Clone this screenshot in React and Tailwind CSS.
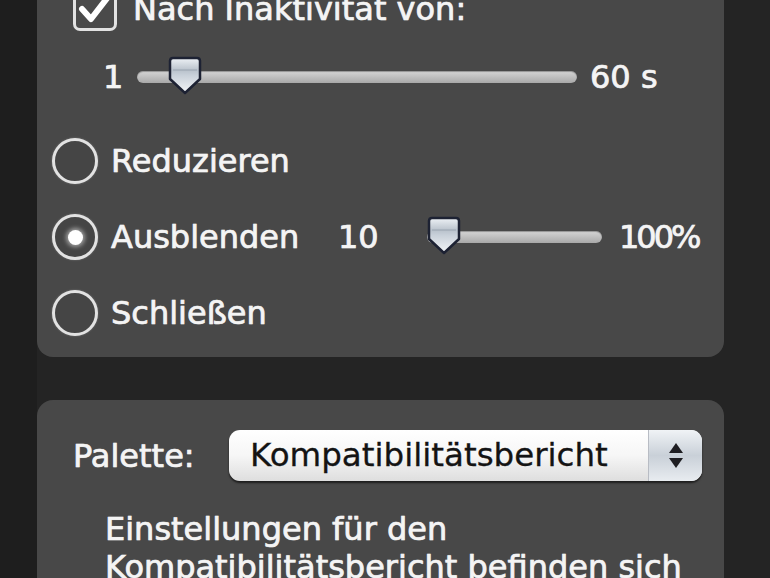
const FONT = { fontFamily: '"DejaVu Sans", Verdana, sans-serif' }

function Knob() {
  return (
    <svg width="34" height="39" viewBox="0 0 34 39" className="shrink-0">
      <defs>
        <linearGradient id="knobFill" x1="0" y1="0" x2="0" y2="1">
          <stop offset="0" stopColor="#eef2f6" />
          <stop offset="0.35" stopColor="#b9c2cc" />
          <stop offset="0.5" stopColor="#c9d1da" />
          <stop offset="1" stopColor="#f4f6f8" />
        </linearGradient>
      </defs>
      <path
        d="M5 2 H29 Q32 2 32 5 V23 L17 37 L2 23 V5 Q2 2 5 2 Z"
        fill="url(#knobFill)"
        stroke="#1d2233"
        strokeWidth="2.5"
        strokeLinejoin="round"
      />
      <path d="M5 14 H29" stroke="#9aa4b0" strokeWidth="1" />
    </svg>
  )
}

function Slider({ width, pos = 0 }) {
  return (
    <div className="relative flex items-center h-[40px] shrink-0" style={{ width }}>
      <div className="w-full h-[12px] rounded-full bg-gradient-to-b from-[#d6d6d6] to-[#a9a9a9] shadow-[inset_0_1px_1px_rgba(0,0,0,0.3)]" />
      <div className="absolute top-[-1px]" style={{ left: pos }}>
        <Knob />
      </div>
    </div>
  )
}

function Radio({ checked }) {
  return (
    <div className="w-[46px] h-[46px] rounded-full border-[3px] border-[#e2e2e2] bg-[#454545] flex items-center justify-center shrink-0 shadow-[0_0_2px_rgba(255,255,255,0.3)]">
      {checked && <div className="w-[15px] h-[15px] rounded-full bg-white shadow-[0_0_4px_2px_rgba(255,255,255,0.5)]" />}
    </div>
  )
}

function Checkbox() {
  return (
    <div className="w-[44px] h-[44px] rounded-[7px] border-[3px] border-[#e2e2e2] bg-[#4a4a4a] flex items-center justify-center shrink-0">
      <svg width="34" height="30" viewBox="0 0 34 30">
        <path d="M4 15 L13 25 L30 3" fill="none" stroke="#ffffff" strokeWidth="6" strokeLinecap="round" strokeLinejoin="round" />
      </svg>
    </div>
  )
}

export default function App() {
  const text =
    'text-[32px] text-[#f4f4f4] [-webkit-text-stroke:0.6px_#f4f4f4] [text-shadow:0_0_1px_rgba(255,255,255,0.6)]'
  const label = `${text} leading-none`

  return (
    <div className="w-[770px] h-[578px] overflow-hidden bg-[#242424] flex" style={FONT}>
      {/* left gutter */}
      <div className="w-[37px] shrink-0 bg-[#1e1e1e]" />

      <div className="w-[687px] shrink-0 flex flex-col">
        {/* Panel 1 — top cut off */}
        <div className="mt-[-40px] pt-[27px] pb-[21px] bg-[#484848] rounded-[16px] flex flex-col">
          <div className="h-[44px] pl-[36px] flex items-center gap-[16px]">
            <Checkbox />
            <span className={label}>Nach Inaktivität von:</span>
          </div>

          <div className="mt-[24px] h-[44px] pl-[66px] flex items-center">
            <span className={`${label} w-[34px]`}>1</span>
            <Slider width={440} pos={31} />
            <span className={`${label} ml-[13px]`}>60 s</span>
          </div>

          <div className="mt-[39px] pl-[15px] flex flex-col gap-[30px]">
            <div className="h-[46px] flex items-center gap-[13px]">
              <Radio />
              <span className={label}>Reduzieren</span>
            </div>
            <div className="h-[46px] flex items-center gap-[13px]">
              <Radio checked />
              <div className="flex items-center">
                <span className={`${label} w-[227px]`}>Ausblenden</span>
                <span className={`${label} w-[89px]`}>10</span>
                <Slider width={175} pos={0} />
                <span className={`${label} ml-[17px] tracking-[-3px]`}>100%</span>
              </div>
            </div>
            <div className="h-[46px] flex items-center gap-[13px]">
              <Radio />
              <span className={label}>Schließen</span>
            </div>
          </div>
        </div>

        {/* Panel 2 — bottom cut off */}
        <div className="mt-[43px] pt-[30px] pb-[40px] bg-[#484848] rounded-[16px] flex flex-col">
          <div className="pl-[36px] flex items-center">
            <span className={`${label} w-[156px]`}>Palette:</span>
            <div className="w-[473px] h-[51px] rounded-[11px] flex overflow-hidden bg-gradient-to-b from-[#ffffff] via-[#f6f6f6] to-[#dedede] shadow-[0_2px_2px_rgba(0,0,0,0.6)]">
              <div className="flex-1 flex items-center pl-[21px]">
                <span className="text-[32.5px] leading-none text-[#141414] [-webkit-text-stroke:0.3px_#141414]">Kompatibilitätsbericht</span>
              </div>
              <div className="w-[54px] border-l border-[#b8bcc4] bg-gradient-to-b from-[#f0f3f6] via-[#c9d0d8] to-[#e8ecf0] flex flex-col items-center justify-center gap-[5px]">
                <svg width="14" height="10" viewBox="0 0 14 10"><path d="M7 0 L14 10 H0 Z" fill="#1e1e22" /></svg>
                <svg width="14" height="10" viewBox="0 0 14 10"><path d="M0 0 H14 L7 10 Z" fill="#1e1e22" /></svg>
              </div>
            </div>
          </div>

          <div className="mt-[29px] pl-[68px] flex flex-col">
            <span className={`${text} leading-[38px]`}>Einstellungen für den</span>
            <span className={`${text} leading-[38px]`}>Kompatibilitätsbericht befinden sich</span>
          </div>
        </div>
      </div>

      <div className="flex-1 bg-[#242424]" />
    </div>
  )
}
